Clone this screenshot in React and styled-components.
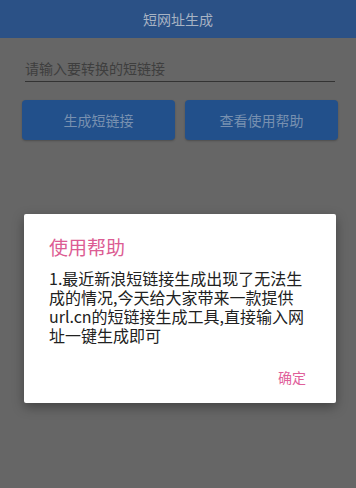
import React from "react";
import styled, { createGlobalStyle } from "styled-components";

const GlobalStyle = createGlobalStyle`
  html, body {
    margin: 0;
    padding: 0;
    background: #666666;
  }
  body {
    font-family: "Noto Sans CJK SC", "Noto Sans", sans-serif;
  }
`;

const Screen = styled.div`
  width: 356px;
  height: 488px;
  background: #666666;
  position: relative;
  overflow: hidden;
`;

const AppBar = styled.header`
  height: 38px;
  background: #2b5186;
  display: flex;
  align-items: center;
  justify-content: center;
  color: #a8b3c3;
  font-size: 14px;
`;

const Content = styled.main`
  padding: 20px 18px 0 22px;
  display: flex;
  flex-direction: column;
  gap: 18px;
`;

const Field = styled.div`
  margin: 0 3px;
  padding: 0 0 3px 0;
  border-bottom: 1.5px solid #333333;
  color: #3e3e3e;
  font-size: 14px;
  line-height: 20px;
`;

const Buttons = styled.div`
  display: grid;
  grid-template-columns: 1fr 1fr;
  gap: 10px;
`;

const Button = styled.button`
  height: 40px;
  border: none;
  border-radius: 4px;
  background: #22508b;
  color: #7890b0;
  font-family: inherit;
  font-size: 14px;
  box-shadow: 0 1px 2px rgba(0, 0, 0, 0.25);
`;

const Overlay = styled.div`
  position: absolute;
  inset: 0;
  display: flex;
  align-items: flex-start;
  padding: 214px 0 0 24px;
`;

const Dialog = styled.div`
  width: 312px;
  height: 189px;
  box-sizing: border-box;
  background: #ffffff;
  border-radius: 2px;
  box-shadow: 0 4px 12px rgba(0, 0, 0, 0.35);
  padding: 20px 24px 0 25px;
  display: flex;
  flex-direction: column;
`;

const Title = styled.h2`
  margin: 0;
  font-size: 19px;
  font-weight: 400;
  line-height: 26px;
  color: #dc5c93;
`;

const Body = styled.div`
  margin-top: 9px;
  font-size: 16px;
  line-height: 19px;
  color: #212121;
`;

const Line = styled.div`
  white-space: nowrap;
`;

const Actions = styled.div`
  margin-top: auto;
  margin-bottom: 16px;
  display: flex;
  justify-content: flex-end;
`;

const TextButton = styled.span`
  color: #e0609a;
  font-size: 14px;
  margin-right: 6px;
`;

const lines = [
  "1.最近新浪短链接生成出现了无法生",
  "成的情况,今天给大家带来一款提供",
  "url.cn的短链接生成工具,直接输入网",
  "址一键生成即可",
];

export default function App() {
  return (
    <Screen>
      <GlobalStyle />
      <AppBar>短网址生成</AppBar>
      <Content>
        <Field>请输入要转换的短链接</Field>
        <Buttons>
          <Button>生成短链接</Button>
          <Button>查看使用帮助</Button>
        </Buttons>
      </Content>
      <Overlay>
        <Dialog>
          <Title>使用帮助</Title>
          <Body>
            {lines.map((l) => (
              <Line key={l}>{l}</Line>
            ))}
          </Body>
          <Actions>
            <TextButton>确定</TextButton>
          </Actions>
        </Dialog>
      </Overlay>
    </Screen>
  );
}
